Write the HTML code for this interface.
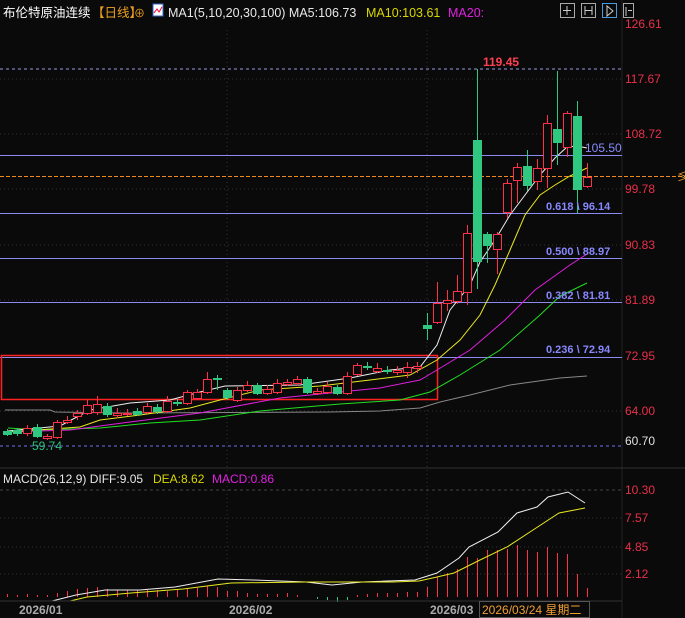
<!DOCTYPE html><html><head><meta charset="utf-8"><style>
body{margin:0;background:#0a0a0a;width:685px;height:618px;overflow:hidden;font-family:"Liberation Sans","Noto Sans CJK SC",sans-serif}
svg{display:block}
</style></head><body>
<svg id="s" width="685" height="618" xmlns="http://www.w3.org/2000/svg" font-family="Liberation Sans, Noto Sans CJK SC, sans-serif">
<rect width="685" height="618" fill="#0a0a0a"/>
<g stroke="#333" stroke-dasharray="1,3">
<line x1="0" y1="79" x2="622" y2="79"/><line x1="0" y1="134" x2="622" y2="134"/><line x1="0" y1="189" x2="622" y2="189"/><line x1="0" y1="245" x2="622" y2="245"/><line x1="0" y1="300" x2="622" y2="300"/><line x1="0" y1="411" x2="622" y2="411"/>
<line x1="0" y1="518" x2="622" y2="518"/><line x1="0" y1="547" x2="622" y2="547"/><line x1="0" y1="574" x2="622" y2="574"/>
<line x1="227" y1="30" x2="227" y2="600"/><line x1="427" y1="30" x2="427" y2="600"/>
</g>
<line x1="622" y1="0" x2="622" y2="618" stroke="#222"/>
<line x1="0" y1="468" x2="685" y2="468" stroke="#333"/>
<line x1="0" y1="490" x2="622" y2="490" stroke="#444" stroke-dasharray="3,3"/>
<line x1="0" y1="69" x2="622" y2="69" stroke="#9a9ae8" stroke-dasharray="3,3"/>
<line x1="0" y1="446" x2="622" y2="446" stroke="#7070f0" stroke-dasharray="3,3"/>
<g stroke="#8a8af0" stroke-width="1">
<line x1="0" y1="155.5" x2="622" y2="155.5"/><line x1="0" y1="213.5" x2="622" y2="213.5"/><line x1="0" y1="258.5" x2="622" y2="258.5"/><line x1="0" y1="302.5" x2="622" y2="302.5"/><line x1="0" y1="357.5" x2="622" y2="357.5"/>
</g>
<rect x="1.5" y="355.5" width="436" height="44" fill="none" stroke="#ff2020" stroke-width="1.5"/>
<line x1="0" y1="176.5" x2="685" y2="176.5" stroke="#f08a20" stroke-dasharray="4,2"/>
<text x="677" y="180" fill="#f0a030" font-size="11">≶</text>
<g id="ma" fill="none" stroke-width="1"></g>
<g id="cd"></g>
<g font-size="11" font-weight="bold" fill="#8888ff">
<text x="546" y="210">0.618 \ 96.14</text><text x="546" y="255">0.500 \ 88.97</text><text x="546" y="299">0.382 \ 81.81</text><text x="546" y="353">0.236 \ 72.94</text>
</g>
<text x="483" y="66" fill="#ff4050" font-size="12" font-weight="bold">119.45</text>
<text x="585" y="152" fill="#8a8aff" font-size="12">105.50</text>
<text x="32" y="450" fill="#30c080" font-size="12">59.74</text>
<g fill="#e8304a" font-size="12">
<text x="625" y="28">126.61</text><text x="625" y="83">117.67</text><text x="625" y="138">108.72</text><text x="625" y="193">99.78</text><text x="625" y="249">90.83</text><text x="625" y="304">81.89</text><text x="625" y="360">72.95</text><text x="625" y="415">64.00</text>
<text x="625" y="494">10.30</text><text x="625" y="522">7.57</text><text x="625" y="551">4.85</text><text x="625" y="578">2.12</text>
</g>
<text x="625" y="445" fill="#e0e0e0" font-size="12">60.70</text>
<text x="3" y="17" fill="#fff" font-size="12.5">布伦特原油连续</text>
<text x="92" y="17" fill="#f0a020" font-size="12.5">【日线】</text>
<text x="134" y="17" fill="#f0a020" font-size="11">⊕</text>
<rect x="153" y="4" width="10" height="12" fill="#fff" stroke="#36c"/><polyline points="154,13 157,9 159,12 162,7" stroke="#e03" fill="none"/>
<text x="168" y="17" fill="#e8e8e8" font-size="12.5">MA1(5,10,20,30,100) MA5:106.73</text>
<text x="366" y="17" fill="#d8d800" font-size="12.5">MA10:103.61</text>
<text x="448" y="17" fill="#e020e0" font-size="12.5">MA20:</text>
<g fill="none" stroke="#aaa"><rect x="560.5" y="3.5" width="14" height="14"/><rect x="581.5" y="3.5" width="14" height="14"/><rect x="602.5" y="3.5" width="14" height="14" stroke="#4a9ae0"/><rect x="623.5" y="3.5" width="10" height="14"/></g>
<path d="M567 6v9M563 10.5h8M585 6v9M592 6v9M585 10.5h7M607 6v10l6-5z M626 7v9M628 10.5h4" stroke="#ccc" fill="none"/>
<text x="3" y="483" fill="#e8e8e8" font-size="12">MACD(26,12,9) DIFF:9.05</text>
<text x="153" y="483" fill="#d8d800" font-size="12">DEA:8.62</text>
<text x="212" y="483" fill="#e020e0" font-size="12">MACD:0.86</text>
<g id="mc"></g>
<line x1="0" y1="601" x2="622" y2="601" stroke="#333"/>
<g fill="#aaa" font-size="12" font-weight="bold"><text x="19" y="614">2026/01</text><text x="229" y="614">2026/02</text><text x="430" y="614">2026/03</text></g>
<rect x="479.5" y="601.5" width="110" height="16" fill="none" stroke="#555"/>
<text x="482" y="614" fill="#f0a030" font-size="12">2026/03/24 星期二</text>
</svg>
<script>
var N="http://www.w3.org/2000/svg";
function el(p,t,a){var e=document.createElementNS(N,t);for(var k in a)e.setAttribute(k,a[k]);p.appendChild(e);return e;}
var ma=document.getElementById('ma');
function pl(c,pts){el(ma,'polyline',{points:pts,stroke:c});}
pl('#888','5,410 50,410 55,412 120,413 330,412 380,411 420,408 440,402 470,395 510,385 560,378 587,376');
pl('#20e020','8,428 40,430 100,428 150,423 200,420 260,411 340,404 400,400 430,392 460,375 500,350 540,315 560,296 587,283');
pl('#e020e0','8,432 70,430 130,422 200,413 280,398 330,393 380,388 420,380 437,370 470,350 505,320 535,290 570,265 587,254');
pl('#e8e820','8,432 80,427 100,420 140,415 190,408 220,400 260,390 320,386 370,380 410,375 437,360 460,340 480,315 495,285 510,250 525,215 540,195 555,185 570,176 587,168');
pl('#f0f0f0','8,431 60,426 90,410 130,403 170,400 200,392 225,386 300,385 350,378 390,370 420,367 437,345 450,310 470,285 480,262 495,240 510,215 525,195 540,175 555,158 567,147 577,146 587,148');
var cd=document.getElementById('cd');
var C=[[7,431,434,429,436],[17,430,433,428,436],[27,433,428,425,436],[37,427,436,424,438],[47,438,436,434,440],[57,437,422,420,439],[67,422,420,416,424],[77,416,413,410,420],[87,413,405,400,415],[97,412,404,396,415],[107,406,414,403,417],[117,415,413,408,418],[127,414,413,409,416],[137,411,414,408,416],[147,412,406,403,414],[157,407,411,404,414],[167,411,401,396,413],[177,402,403,399,406],[187,403,392,390,405],[197,398,392,389,400],[207,392,379,372,394],[217,378,379,375,390],[227,390,397,388,400],[237,400,390,387,402],[247,390,385,381,392],[257,385,393,383,395],[267,393,389,385,395],[277,392,383,379,394],[287,384,382,379,386],[297,383,379,376,386],[307,379,392,377,394],[317,393,391,388,395],[327,392,386,382,394],[337,387,393,385,395],[347,393,376,372,395],[357,374,365,363,376],[367,366,367,362,370],[377,371,368,363,373],[387,370,371,366,374],[397,372,370,366,375],[407,372,367,362,378],[417,368,366,362,373],[427,325,328,313,340],[437,322,303,282,324],[447,303,300,290,311],[457,301,291,275,304],[467,292,233,225,305],[477,140,261,69,289],[487,234,245,232,263],[497,249,234,232,274],[507,212,183,179,218],[517,180,167,163,203],[527,166,185,150,191],[537,181,168,159,190],[547,168,123,115,188],[557,129,142,71,165],[567,147,113,111,157],[577,116,189,101,213],[587,186,177,163,188]];
C.forEach(function(c){var x=c[0],o=c[1],cl=c[2],up=cl<=o;var col=up?'#ff3048':'#30c880';
el(cd,'line',{x1:x+.5,x2:x+.5,y1:c[3],y2:c[4],stroke:col});
var t=Math.min(o,cl),h=Math.max(Math.abs(o-cl),1);
if(up)el(cd,'rect',{x:x-3.5,y:t+.5,width:8,height:h,fill:'#0a0a0a',stroke:col});
else el(cd,'rect',{x:x-4,y:t,width:9,height:h+1,fill:col});});
var mc=document.getElementById('mc');
var B=[[7,3],[17,2],[27,3],[37,2],[47,2],[57,4],[67,6],[77,8],[87,9],[97,10],[107,8],[117,7],[127,7],[137,7],[147,7],[157,7],[167,6],[177,7],[187,8],[197,9],[207,11],[217,10],[227,6],[237,6],[247,4],[257,3],[267,3],[277,3],[287,4],[297,2],[317,-2],[327,-3],[337,-5],[347,-3],[357,2],[367,3],[377,4],[387,4],[397,4],[407,5],[417,5],[427,10],[437,20],[447,24],[457,28],[467,40],[477,39],[487,47],[497,47],[507,48],[517,52],[527,47],[537,45],[547,50],[557,44],[567,43],[577,23],[587,9]];
B.forEach(function(b){var up=b[1]>0;el(mc,'line',{x1:b[0]+.5,x2:b[0]+.5,y1:597,y2:597-b[1],stroke:up?'#ff3048':'#30c880'});});
el(mc,'polyline',{points:'0,601 52,601 76,595 105,590 140,590 175,587 218,579 253,580 306,582 332,585 362,582 415,580 437,573 459,558 469,547 498,532 517,513 537,507 548,497 568,492 585,503',stroke:'#f0f0f0',fill:'none'});
el(mc,'polyline',{points:'0,601 70,601 87,597 131,593 183,589 231,583 306,582 393,582 419,581 437,577 454,573 480,560 507,547 533,530 559,513 585,508',stroke:'#e8e820',fill:'none'});
</script>
</body></html>
